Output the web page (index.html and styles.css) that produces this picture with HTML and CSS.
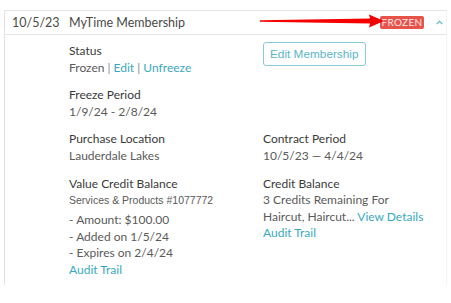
FILE: index.html
```html
<!DOCTYPE html>
<html lang="en">
<head>
    <meta charset="UTF-8">
    <title>Membership</title>
    <link rel="stylesheet" href="styles.css">
</head>
<body>
    <!-- Membership card -->
    <div class="membership">
        <div class="membership-header">
            <span class="date">10/5/23</span>
            <span class="name">MyTime Membership</span>
            <span class="badge">FROZEN</span>
            <svg class="chevron" width="7" height="5" viewBox="0 0 7 5">
                <path d="M0.6 4.2 L3.5 1.3 L6.4 4.2" fill="none" stroke="#5ab5c8" stroke-width="1.1"/>
            </svg>
            <!-- red annotation arrow -->
            <svg class="arrow" width="126" height="14" viewBox="0 0 126 14">
                <polygon points="0,6.3 110,4.6 109,0.5 124,7 109,13.5 110,9.4 0,7.7" fill="#f50000"/>
            </svg>
        </div>

        <div class="membership-body">
            <div class="field">
                <div class="label">Status</div>
                <div class="value">Frozen <span class="sep">|</span> <a href="#">Edit</a> <span class="sep">|</span> <a href="#">Unfreeze</a></div>
            </div>
            <div class="field">
                <button class="edit-btn">Edit Membership</button>
            </div>

            <div class="field">
                <div class="label">Freeze Period</div>
                <div class="value">1/9/24 - 2/8/24</div>
            </div>
            <div class="field"></div>

            <div class="field">
                <div class="label">Purchase Location</div>
                <div class="value">Lauderdale Lakes</div>
            </div>
            <div class="field">
                <div class="label">Contract Period</div>
                <div class="value">10/5/23 &mdash; 4/4/24</div>
            </div>

            <div class="field">
                <div class="label">Value Credit Balance</div>
                <div class="value product">Services &amp; Products #1077772</div>
                <ul class="credit-list">
                    <li>- Amount: $100.00</li>
                    <li>- Added on 1/5/24</li>
                    <li>- Expires on 2/4/24</li>
                </ul>
                <a href="#">Audit Trail</a>
            </div>
            <div class="field">
                <div class="label">Credit Balance</div>
                <div class="value">3 Credits Remaining For<br>Haircut, Haircut... <a href="#">View Details</a></div>
                <a href="#">Audit Trail</a>
            </div>
        </div>
    </div>
</body>
</html>
```

FILE: styles.css
```css
/* General body styling */
body {
    margin: 0;
    background-color: white;
    font-family: Lato, "Open Sans", sans-serif;
    color: #5a5a5a;
}

a {
    color: #3aa8c1;
    text-decoration: none;
}

/* Card */
.membership {
    margin: 10px 4px 0 4px;
    border-left: 1px solid #e2e2e2;
    border-right: 1px solid #f3f3f3;
}

.membership-header {
    position: relative;
    display: flex;
    align-items: center;
    height: 23px;
    border-top: 1px solid #e4e4e4;
    border-bottom: 1px solid #e4e4e4;
    font-size: 12.5px;
    color: #4a4a4a;
}

.membership-header .date {
    margin-left: 7px;
    width: 57px;
}

.badge {
    margin-left: auto;
    width: 44px;
    text-align: center;
    background-color: #e5534b;
    color: #fde8e6;
    font-size: 10px;
    letter-spacing: 0.3px;
    line-height: 13px;
    border-radius: 2px;
}

.chevron {
    margin: 0 3px 0 12px;
}

.arrow {
    position: absolute;
    left: 255px;
    top: 3px;
}

/* Body */
.membership-body {
    display: grid;
    grid-template-columns: 194px 1fr;
    row-gap: 11px;
    padding: 8px 0 6px 64px;
    font-size: 12px;
    line-height: 16.6px;
}

.label {
    color: #3a3a3a;
}

.sep {
    color: #888;
}

.product {
    font-family: "Liberation Sans", Arial, sans-serif;
    font-size: 10.5px;
    line-height: 17px;
}

.credit-list {
    list-style: none;
    margin: 3px 0 0 0;
    padding: 0;
}

.edit-btn {
    margin-top: -1px;
    height: 24px;
    padding: 0 6px;
    background: white;
    border: 1px solid #86cbd8;
    border-radius: 3px;
    color: #5ab5c8;
    font-family: "Liberation Sans", Arial, sans-serif;
    font-size: 11.8px;
}
```
